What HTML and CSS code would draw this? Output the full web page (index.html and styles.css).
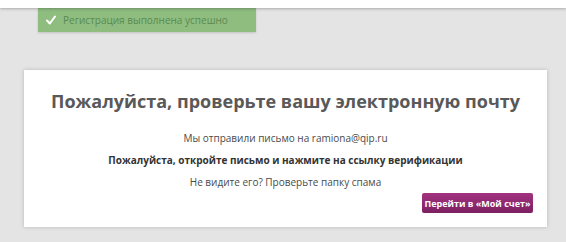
FILE: index.html
```html
<!DOCTYPE html>
<html lang="ru">

<head>
  <meta charset="UTF-8" />
  <meta name="viewport" content="width=device-width, initial-scale=1.0" />
  <title>Проверьте почту</title>
  <link rel="stylesheet" href="styles.css">
</head>

<body>
  <div class="header"></div>
  <div class="notice">
    <svg class="notice-icon" width="10" height="10" viewBox="0 0 10 10">
      <path d="M1 5.5 L3.8 8.5 L9 1.5" fill="none" stroke="#fff" stroke-width="2" stroke-linecap="round" stroke-linejoin="round" />
    </svg>
    <span>Регистрация выполнена успешно</span>
  </div>
  <div class="card">
    <h1>Пожалуйста, проверьте вашу электронную почту</h1>
    <p>Мы отправили письмо на ramiona@qip.ru</p>
    <p class="strong">Пожалуйста, откройте письмо и нажмите на ссылку верификации</p>
    <p>Не видите его? Проверьте папку спама</p>
    <div class="actions">
      <button class="btn">Перейти в «Мой счет»</button>
    </div>
  </div>
</body>

</html>
```

FILE: styles.css
```css
* {
  box-sizing: border-box;
}

body {
  margin: 0;
  height: 242px;
  overflow: hidden;
  background: #e4e4e4;
  font-family: "Open Sans", "Liberation Sans", sans-serif;
}

.header {
  height: 8px;
  background: #fff;
  box-shadow: 0 1px 3px rgba(0, 0, 0, 0.25);
  position: relative;
  z-index: 1;
}

.notice {
  margin-left: 38px;
  width: 218px;
  height: 24px;
  background: #8fbd80;
  display: flex;
  align-items: center;
  padding-left: 8px;
  box-shadow: 0 1px 2px rgba(0, 0, 0, 0.15);
}

.notice-icon {
  margin-right: 7px;
}

.notice span {
  font-size: 10px;
  color: #5a8a50;
}

.card {
  margin: 38px 0 0 24px;
  width: 523px;
  height: 157px;
  background: #fff;
  box-shadow: 0 0 4px rgba(0, 0, 0, 0.2);
  padding: 19px 14px 0 14px;
  text-align: center;
}

.card h1 {
  margin: 0 0 14px;
  font-size: 18px;
  line-height: 24px;
  font-weight: 700;
  color: #595959;
}

.card p {
  margin: 0;
  font-size: 10px;
  line-height: 22px;
  color: #4a4a4a;
}

.card p.strong {
  font-weight: 700;
  color: #333;
}

.actions {
  display: flex;
  justify-content: flex-end;
}

.btn {
  appearance: none;
  border: none;
  border-radius: 2px;
  width: 111px;
  height: 20px;
  padding: 0;
  background: linear-gradient(#a3337f, #7c2062);
  color: #fff;
  font-family: inherit;
  font-size: 9px;
  font-weight: 700;
  cursor: pointer;
}
```
